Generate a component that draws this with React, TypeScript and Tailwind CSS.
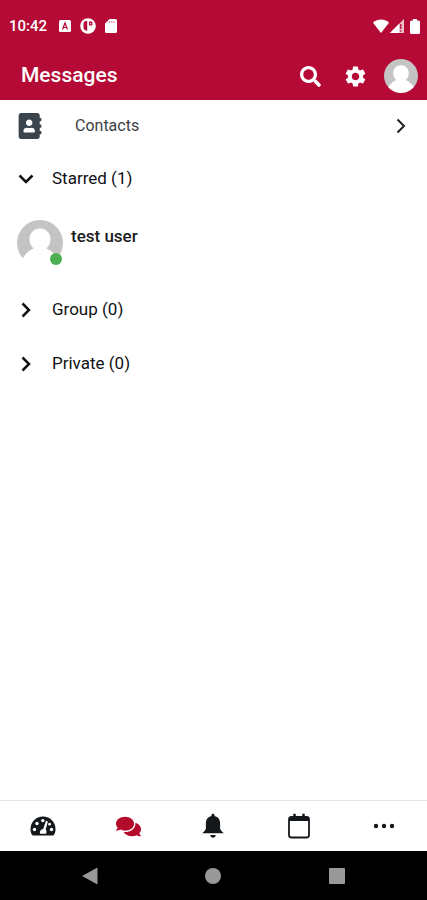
import { useState } from "react";
import { FaAddressBook, FaComments, FaSearch } from "react-icons/fa";
import { MdSettings } from "react-icons/md";

type ChevronProps = { className: string }

const Chevron = ({ className }: ChevronProps) => (
   <svg viewBox="0 0 16 16" className={className} fill="none" stroke="currentColor" aria-hidden="true">
      <path d="M4.500 1.500 11 8l-6.500 6.500" />
   </svg>
)

const Avatar = ({ className }: { className: string }) => (
   <svg viewBox="0 0 46 46" className={className} role="img" aria-label="avatar">
      <clipPath id="round"><circle cx="23" cy="23" r="23" /></clipPath>
      <g clipPath="url(#round)">
         <path d="M0 0h46v40H0z" fill="#c4c4c4" />
         <path d="M23 8.500c6 0 10.500 4.500 10.500 10.500 0 4-1.500 7-4 9.500 4.500 2 9 5.500 11.500 11.500v6H5v-6c2.500-6 7-9.500 11.500-11.500-2.500-2.500-4-5.500-4-9.500C12.500 13 17 8.500 23 8.500zM0 39.500h46V46H0z" fill="#fff" />
      </g>
   </svg>
)

const DashboardIcon = () => (
   <svg viewBox="0 0 26 20" className="h-5 w-[26px]" aria-hidden="true">
      <path d="M13 .5C6 .5.5 6 .5 13c0 2 .4 4 1.300 5.500.3.700.8 1 1.500 1h19.400c.7 0 1.200-.3 1.500-1 .9-1.500 1.300-3.500 1.300-5.500C25.500 6 20 .5 13 .5z" fill="currentColor" />
      <g fill="#fff">
         <circle cx="4.500" cy="13.500" r="1.700" />
         <circle cx="7" cy="7.500" r="1.700" />
         <circle cx="12.800" cy="4.600" r="1.700" />
         <circle cx="21.500" cy="13.500" r="1.700" />
         <circle cx="19.600" cy="8.200" r="1.400" />
         <path d="m16 4.800 1.900.6-2.200 8.200c1 1.200 1 2.700.4 4.200h-5.900c-.9-2 .3-4.300 3-4.700z" />
      </g>
   </svg>
)

const BellIcon = () => (
   <svg viewBox="0 0 24 26" className="h-[26px] w-6" fill="currentColor" aria-hidden="true">
      <path d="M12 .8c.9 0 1.600.7 1.600 1.600v.5c3.500.8 5.500 3.600 5.500 7.300v5.600l1.300 2.200 2.400 2.200H1.200L3.600 18l1.300-2.200v-5.600c0-3.700 2-6.500 5.500-7.300v-.5c0-.9.7-1.600 1.600-1.600z" />
      <path d="M9.300 22h5.400c-.3 1.700-1.200 2.700-2.700 2.700S9.600 23.700 9.300 22z" />
   </svg>
)

const CalendarIcon = () => (
   <svg viewBox="0 0 24 26" className="h-[26px] w-6" fill="none" stroke="currentColor" aria-hidden="true">
      <rect x="2" y="4" width="20" height="20.500" rx="2.500" strokeWidth="1.800" />
      <path d="M2 6h20" strokeWidth="4" />
      <path d="M7.500 .8v4M16.500 .8v4" strokeWidth="2.500" />
   </svg>
)

const MoreIcon = () => (
   <svg viewBox="0 0 22 6" className="h-[6px] w-[22px]" fill="currentColor" aria-hidden="true">
      <circle cx="3" cy="3" r="2.200" />
      <circle cx="11" cy="3" r="2.200" />
      <circle cx="19" cy="3" r="2.200" />
   </svg>
)

const StatusBar = () => (
   <div className="flex h-[52px] items-center justify-between pl-[9px] pr-[7px]">
      <div className="flex items-center">
         <span className="text-[15px] font-medium">10:42</span>
         <svg viewBox="0 0 12 12" className="ml-3 size-3" aria-hidden="true">
            <rect width="12" height="12" rx="1.500" fill="#fff" />
            <path d="M3.500 9.500 6 3l2.500 6.500M4.500 7.500h3" fill="none" stroke="#b40a35" strokeWidth="1.200" />
         </svg>
         <svg viewBox="0 0 16 16" className="ml-[9px] size-4" aria-hidden="true">
            <circle cx="8" cy="8" r="7.800" fill="#fff" />
            <path d="M7.200 3H5.500A2.800 2.800 0 0 0 3.500 6v3.500c0 1.500 1.300 2.800 3 3.300h.7z" fill="#b40a35" />
            <path d="M9 3.500h2.200a1.300 1.300 0 0 1 1.300 1.300v1.400A1.300 1.300 0 0 1 11.200 7.500H9z" fill="#b40a35" />
            <path d="M10.200 5h1v1.200h-1z" fill="#fff" />
         </svg>
         <svg viewBox="0 0 12 14" className="ml-[9px] h-[14px] w-3" aria-hidden="true">
            <path d="M4.500 0h6A1.500 1.500 0 0 1 12 1.500v11a1.500 1.500 0 0 1-1.500 1.500h-9A1.500 1.500 0 0 1 0 12.500v-8z" fill="#fff" />
            <path d="M4.500 2v2M6.800 2v2M9.100 2v2" stroke="#b40a35" strokeWidth=".5" />
         </svg>
      </div>
      <div className="flex items-center">
         <svg viewBox="0 0 16 14" className="h-[14px] w-4" fill="#fff" aria-hidden="true">
            <path d="M8 14 0 3.800C4.500-.6 11.500-.6 16 3.800z" />
         </svg>
         <svg viewBox="0 0 14 14" className="ml-px size-[14px]" aria-hidden="true">
            <path d="M0 14 14 0v14z" fill="#fff" fillOpacity=".75" />
            <path d="M0 14 9 5v9z" fill="#fff" />
            <path d="M10.800 5v5M10.800 11.200v1.500" stroke="#b40a35" strokeWidth="1.300" />
         </svg>
         <svg viewBox="0 0 10 15" className="ml-[6px] h-[15px] w-[10px]" fill="#fff" aria-hidden="true">
            <path d="M3 0h4v1.500h1.500A1.500 1.500 0 0 1 10 3v10.500A1.500 1.500 0 0 1 8.500 15h-7A1.500 1.500 0 0 1 0 13.500V3a1.500 1.500 0 0 1 1.500-1.500H3z" />
         </svg>
      </div>
   </div>
)

type SectionProps = {
   title: string
   count: number
   startOpen?: boolean
   children?: React.ReactNode
}

const Section = ({ title, count, startOpen = false, children }: SectionProps) => {
   const [open, setOpen] = useState(startOpen)

   return (
      <section>
         <button
            onClick={() => setOpen(!open)}
            aria-expanded={open}
            className="flex h-[54px] w-full items-center gap-[18px] pl-[18px] text-left text-[17px] text-[#101114]">
            <Chevron className={open ? "size-4 rotate-90 stroke-[2.5]" : "size-4 stroke-[2.5]"} />
            <span>{title} ({count})</span>
         </button>
         {open && children}
      </section>
   )
}

const tabs = [
   { name: "Dashboard", icon: <DashboardIcon /> },
   { name: "Messages", icon: <FaComments size={25} /> },
   { name: "Notifications", icon: <BellIcon /> },
   { name: "Calendar", icon: <CalendarIcon /> },
   { name: "More", icon: <MoreIcon /> },
]

function App() {
   const [active, setActive] = useState("Messages")

   return (
      <div className="flex min-h-screen flex-col bg-white font-[Roboto,sans-serif]">
         <header className="bg-[#b40a35] text-white">
            <StatusBar />
            <div className="flex h-12 items-center pl-[21px] pr-[9px]">
               <h1 className="flex-1 text-[21px] font-medium">Messages</h1>
               <div className="flex items-center gap-4">
                  <button aria-label="Search" className="mr-[6px]"><FaSearch size={21} /></button>
                  <button aria-label="Settings"><MdSettings size={25} /></button>
                  <button aria-label="Profile"><Avatar className="size-[34px]" /></button>
               </div>
            </div>
         </header>

         <main className="flex-1">
            <a href="#contacts" className="flex h-[52px] items-center pl-[17px] pr-[18px] text-[16px] text-[#3c3e42]">
               <FaAddressBook size={26} className="text-[#3a444c]" />
               <span className="flex-1 pl-8">Contacts</span>
               <Chevron className="size-4 stroke-2 text-[#202226]" />
            </a>
            <Section title="Starred" count={1} startOpen>
               <button className="flex h-[77px] w-full items-start gap-2 pl-[17px] pt-[14px] text-left">
                  <span className="relative">
                     <Avatar className="size-[46px]" />
                     <span className="absolute bottom-px right-px size-3 rounded-full bg-[#4caf50]" />
                  </span>
                  <span className="pt-1 text-[17px] font-medium text-[#1c1c1e]">test user</span>
               </button>
            </Section>
            <Section title="Group" count={0} />
            <Section title="Private" count={0} />
         </main>

         <nav className="grid h-[51px] grid-cols-5 border-t border-[#e4e4e4]">
            {tabs.map((tab) => (
               <button
                  key={tab.name}
                  aria-label={tab.name}
                  onClick={() => setActive(tab.name)}
                  className={active === tab.name ? "flex items-center justify-center text-[#b40a2c]" : "flex items-center justify-center text-[#15181b]"}>
                  {tab.icon}
               </button>
            ))}
         </nav>

         <footer className="flex h-[49px] items-center justify-around bg-black px-7 text-[#999]">
            <button aria-label="Back">
               <svg viewBox="0 0 18 18" className="size-[18px]" fill="currentColor"><path d="M16.500.5v17L1 9z" /></svg>
            </button>
            <button aria-label="Home">
               <svg viewBox="0 0 18 18" className="size-[18px]" fill="currentColor"><circle cx="9" cy="9" r="8" /></svg>
            </button>
            <button aria-label="Recent apps">
               <svg viewBox="0 0 18 18" className="size-[18px]" fill="currentColor"><rect x="1" y="1" width="16" height="16" rx="1" /></svg>
            </button>
         </footer>
      </div>
   )
}

export default App;
